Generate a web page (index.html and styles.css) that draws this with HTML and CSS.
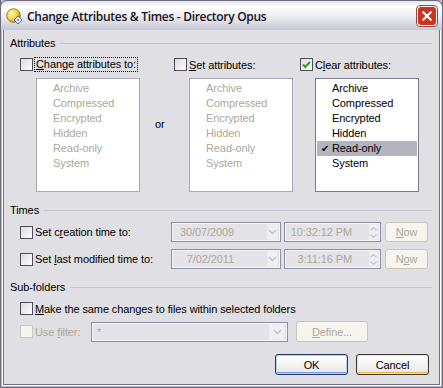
FILE: index.html
```html
<!DOCTYPE html>
<html lang="en">
<head>
    <meta charset="UTF-8">
    <title>Change Attributes &amp; Times - Directory Opus</title>
    <link rel="stylesheet" href="styles.css">
</head>
<body>

<div class="window">
    <div class="titlebar">
        <svg class="app-icon" width="17" height="17" viewBox="0 0 17 17">
            <defs>
                <radialGradient id="sun" cx="0.35" cy="0.35" r="0.7">
                    <stop offset="0" stop-color="#fff8c0"/>
                    <stop offset="0.6" stop-color="#f2d23a"/>
                    <stop offset="1" stop-color="#b58a10"/>
                </radialGradient>
            </defs>
            <circle cx="7.5" cy="7.5" r="6.8" fill="url(#sun)" stroke="#8a6a10" stroke-width="0.8"/>
            <path d="M8 12 L12 8 L16 12 L12 16 Z" fill="#f4f4fa" stroke="#55556a" stroke-width="0.9"/>
            <path d="M10.5 12 L12 10.5 L13.5 12 L12 13.5 Z" fill="#7d7dc8"/>
        </svg>
        <span class="title">Change Attributes &amp; Times - Directory Opus</span>
        <div class="close-btn">
            <span class="close-face">
                <svg width="10" height="10" viewBox="0 0 10 10">
                    <path d="M1.2 1.2 L8.8 8.8 M8.8 1.2 L1.2 8.8" stroke="#ffffff" stroke-width="2.1" stroke-linecap="round"/>
                </svg>
            </span>
        </div>
    </div>

    <div class="client">
        <div class="group-head head-attr"><span>Attributes</span><i class="rule"></i></div>

        <div class="attr-row">
            <div class="attr-col col-change">
                <div class="check-line">
                    <span class="box"></span>
                    <span class="focus"><u>C</u>hange attributes to:</span>
                </div>
                <ul class="list off">
                    <li>Archive</li>
                    <li>Compressed</li>
                    <li>Encrypted</li>
                    <li>Hidden</li>
                    <li>Read-only</li>
                    <li>System</li>
                </ul>
            </div>
            <div class="or">or</div>
            <div class="attr-col col-set">
                <div class="check-line">
                    <span class="box"></span>
                    <span><u>S</u>et attributes:</span>
                </div>
                <ul class="list off">
                    <li>Archive</li>
                    <li>Compressed</li>
                    <li>Encrypted</li>
                    <li>Hidden</li>
                    <li>Read-only</li>
                    <li>System</li>
                </ul>
            </div>
            <div class="attr-col col-clear">
                <div class="check-line">
                    <span class="box checked">
                        <svg width="9" height="9" viewBox="0 0 9 9"><path d="M1 4.5 L3.3 7 L8 1.8" fill="none" stroke="#21a121" stroke-width="1.9"/></svg>
                    </span>
                    <span>C<u>l</u>ear attributes:</span>
                </div>
                <ul class="list on">
                    <li>Archive</li>
                    <li>Compressed</li>
                    <li>Encrypted</li>
                    <li>Hidden</li>
                    <li class="selected"><span class="tick">&#10004;</span>Read-only</li>
                    <li>System</li>
                </ul>
            </div>
        </div>

        <div class="group-head head-times"><span>Times</span><i class="rule"></i></div>

        <div class="time-row">
            <div class="check-line time-label">
                <span class="box"></span>
                <span>Set c<u>r</u>eation time to:</span>
            </div>
            <div class="field date">
                <span class="val">30/07/2009</span>
                <span class="drop"><svg width="9" height="6" viewBox="0 0 9 6"><path d="M1 1 L4.5 4.5 L8 1" fill="none" stroke="#c4c4cc" stroke-width="1.6"/></svg></span>
            </div>
            <div class="field time">
                <span class="val">10:32:12 PM</span>
                <span class="spin">
                    <svg width="7" height="4" viewBox="0 0 7 4"><path d="M0.5 3.5 L3.5 0.5 L6.5 3.5" fill="none" stroke="#c4c4cc" stroke-width="1.2"/></svg>
                    <svg width="7" height="4" viewBox="0 0 7 4"><path d="M0.5 0.5 L3.5 3.5 L6.5 0.5" fill="none" stroke="#c4c4cc" stroke-width="1.2"/></svg>
                </span>
            </div>
            <div class="btn off now"><u>N</u>ow</div>
        </div>

        <div class="time-row">
            <div class="check-line time-label">
                <span class="box"></span>
                <span>Set <u>l</u>ast modified time to:</span>
            </div>
            <div class="field date">
                <span class="val">7/02/2011</span>
                <span class="drop"><svg width="9" height="6" viewBox="0 0 9 6"><path d="M1 1 L4.5 4.5 L8 1" fill="none" stroke="#c4c4cc" stroke-width="1.6"/></svg></span>
            </div>
            <div class="field time">
                <span class="val">3:11:16 PM</span>
                <span class="spin">
                    <svg width="7" height="4" viewBox="0 0 7 4"><path d="M0.5 3.5 L3.5 0.5 L6.5 3.5" fill="none" stroke="#c4c4cc" stroke-width="1.2"/></svg>
                    <svg width="7" height="4" viewBox="0 0 7 4"><path d="M0.5 0.5 L3.5 3.5 L6.5 0.5" fill="none" stroke="#c4c4cc" stroke-width="1.2"/></svg>
                </span>
            </div>
            <div class="btn off now">N<u>o</u>w</div>
        </div>

        <div class="group-head head-sub"><span>Sub-folders</span><i class="rule"></i></div>

        <div class="check-line sub-check">
            <span class="box"></span>
            <span><u>M</u>ake the same changes to files within selected folders</span>
        </div>

        <div class="filter-row">
            <div class="check-line filter-label disabled">
                <span class="box"></span>
                <span>Use <u>f</u>ilter:</span>
            </div>
            <div class="field filter">
                <span class="val">*</span>
                <span class="drop"><svg width="9" height="6" viewBox="0 0 9 6"><path d="M1 1 L4.5 4.5 L8 1" fill="none" stroke="#c4c4cc" stroke-width="1.6"/></svg></span>
            </div>
            <div class="btn off define"><u>D</u>efine...</div>
        </div>

        <div class="actions">
            <div class="btn ok">OK</div>
            <div class="btn cancel">Cancel</div>
        </div>
    </div>
</div>

</body>
</html>
```

FILE: styles.css
```css
html, body {
    margin: 0;
    padding: 0;
}
body {
    font-family: 'Liberation Sans', Arial, sans-serif;
    font-size: 11px;
    letter-spacing: -0.1px;
    color: #000;
    background-color: #e0dfe3;
}
.window {
    width: 443px;
    height: 388px;
    box-sizing: border-box;
    background-color: #e0dfe3;
    border: 1px solid #6b6b7d;
    border-top: none;
    box-shadow: inset 0 0 0 1px #b7b7c6, inset 0 0 0 2px #ffffff, inset 0 0 0 3px #6f6f82;
    padding: 0 3px 3px 3px;
    display: flex;
    flex-direction: column;
    overflow: hidden;
}
u {
    text-decoration: underline;
    text-underline-offset: 1px;
}

/* title bar */
.titlebar {
    height: 30px;
    margin: 0 -4px;
    box-sizing: border-box;
    border: 1px solid #6b6b7d;
    border-bottom: none;
    border-radius: 7px 7px 0 0;
    background: linear-gradient(to bottom, #e4e4ec 0%, #ffffff 18%, #f2f2f6 45%, #dcdce6 75%, #c4c4d4 100%);
    display: flex;
    align-items: center;
    padding: 0 4px 0 5px;
}
.app-icon {
    flex: none;
    margin-top: 1px;
}
.title {
    margin-left: 4px;
    font-family: 'Open Sans', sans-serif;
    font-size: 12px;
    font-weight: 600;
    letter-spacing: -0.3px;
    color: #14141c;
    flex: 1;
    padding-top: 1px;
}
.close-btn {
    flex: none;
    width: 22px;
    height: 22px;
    box-sizing: border-box;
    border: 1px solid #8a4a4a;
    border-radius: 4px;
    background-color: #ffffff;
    padding: 1px;
    margin-top: 1px;
}
.close-face {
    display: flex;
    align-items: center;
    justify-content: center;
    width: 18px;
    height: 18px;
    border-radius: 3px;
    background-color: #cc3322;
}

/* client area */
.client {
    flex: 1;
    padding: 0 6px 0 6px;
    display: flex;
    flex-direction: column;
}
.group-head {
    display: flex;
    align-items: center;
    height: 14px;
}
.group-head .rule {
    flex: 1;
    height: 0;
    border-top: 1px solid #c5c5cf;
    margin-left: 5px;
    margin-right: 1px;
}
.head-attr { margin-top: 6px; }
.head-times { margin-top: 11px; }
.head-sub { margin-top: 11px; }

/* checkboxes */
.check-line {
    display: flex;
    align-items: center;
    height: 15px;
}
.box {
    width: 13px;
    height: 13px;
    box-sizing: border-box;
    border: 1px solid #4d4d60;
    background: linear-gradient(135deg, #dcdcd8 0%, #f4f4f2 70%, #ffffff 100%);
    margin-right: 2px;
    flex: none;
    display: flex;
    align-items: center;
    justify-content: center;
}
.disabled {
    color: #aca899;
}
.disabled .box {
    border-color: #cac8bb;
    background: #f6f5f0;
}
.focus {
    outline: 1px dotted #000;
    outline-offset: 0;
    padding: 0 1px;
    line-height: 13px;
}

/* attribute lists */
.attr-row {
    display: flex;
    margin-top: 7px;
    padding-left: 10px;
}
.attr-col {
    display: flex;
    flex-direction: column;
}
.col-change { width: 130px; }
.col-set { width: 126px; }
.or {
    width: 24px;
    padding-top: 61px;
    padding-left: 5px;
    box-sizing: border-box;
}
.list {
    list-style: none;
    margin: 6px 0 0 16px;
    padding: 2px 1px 0 1px;
    width: 104px;
    height: 114px;
    box-sizing: border-box;
    background-color: #fff;
}
.col-set .list,
.col-clear .list { margin-left: 15px; }
.list li {
    height: 15px;
    line-height: 15px;
    padding-left: 15px;
    position: relative;
}
.list.off {
    border: 1px solid #a5a8b8;
    color: #aca899;
}
.list.on {
    border: 1px solid #7b7b8f;
}
.list li.selected {
    background-color: #b3b4c0;
}
.tick {
    position: absolute;
    left: 4px;
    top: 0;
    font-size: 10px;
}

/* times */
.time-row {
    display: flex;
    align-items: center;
    height: 20px;
    padding-left: 10px;
    margin-top: 5px;
}
.time-row + .time-row { margin-top: 7px; }
.time-label { width: 151px; }
.field {
    height: 20px;
    box-sizing: border-box;
    border: 1px solid #8d90a6;
    box-shadow: inset 0 0 0 1px #f6f6f8;
    background-color: #e4e3e8;
    color: #aca899;
    display: flex;
    align-items: center;
    justify-content: flex-end;
    padding: 2px;
}
.field .val {
    text-align: right;
    flex: none;
    white-space: nowrap;
}
.date { width: 110px; }
.date .val { width: 60px; margin-right: 33px; }
.time { width: 97px; margin-left: 3px; }
.time .val { width: 66px; margin-right: 17px; }
.drop {
    width: 16px;
    height: 16px;
    box-sizing: border-box;
    border: 1px solid #ebebef;
    background-color: #f0f0f3;
    display: flex;
    align-items: center;
    justify-content: center;
}
.spin {
    width: 14px;
    height: 16px;
    display: flex;
    flex-direction: column;
    align-items: center;
    justify-content: center;
    gap: 3px;
    background-color: #f0f0f3;
    border: 1px solid #ebebef;
    box-sizing: border-box;
}

/* buttons */
.btn {
    height: 20px;
    box-sizing: border-box;
    border-radius: 3px;
    display: flex;
    align-items: center;
    justify-content: center;
}
.btn.off {
    border: 1px solid #c9c7ba;
    background-color: #f5f4ef;
    color: #aca899;
}
.now {
    width: 43px;
    margin-left: 4px;
}

/* sub-folders */
.sub-check {
    margin-top: 7px;
    padding-left: 10px;
}
.filter-row {
    display: flex;
    align-items: center;
    height: 21px;
    margin-top: 5px;
    padding-left: 10px;
}
.filter-label { width: 71px; }
.filter {
    width: 197px;
    justify-content: space-between;
    padding-left: 5px;
}
.define {
    width: 72px;
    height: 21px;
    margin-left: 8px;
}

/* dialog buttons */
.actions {
    display: flex;
    justify-content: flex-end;
    gap: 8px;
    margin-top: 12px;
    padding-right: 4px;
}
.ok, .cancel {
    width: 73px;
    height: 21px;
    background: linear-gradient(to bottom, #ffffff 0%, #f4f4f4 50%, #e6e6ea 100%);
}
.ok {
    border: 1px solid #243a66;
    box-shadow: inset 0 0 0 1px #b9d0f4, inset 0 -1px 0 1px #7d9ce4;
}
.cancel {
    border: 1px solid #3a3a32;
    box-shadow: inset 0 0 0 1px #fce6a8, inset 0 -1px 0 1px #f0b640;
}
```
